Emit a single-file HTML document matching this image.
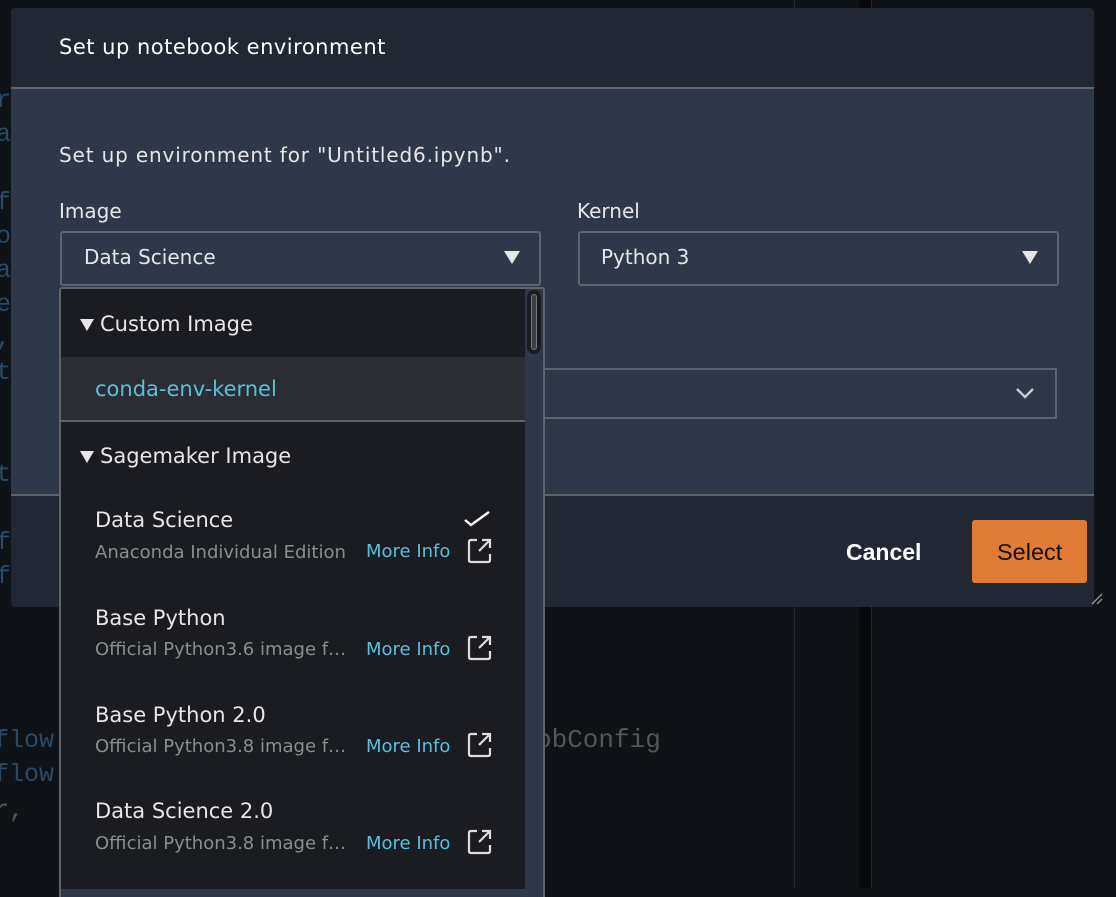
<!DOCTYPE html>
<html><head><meta charset="utf-8"><style>
*{margin:0;padding:0;box-sizing:border-box}
body{width:1116px;height:888px;overflow:hidden;background:#0f1217;font-family:"DejaVu Sans",sans-serif;position:relative}
.abs{position:absolute}
.code{font-family:"Liberation Mono",monospace;font-size:25px;white-space:pre}
.t{position:absolute;white-space:nowrap}
</style></head><body>
<!-- background -->
<div class="abs" style="left:794px;top:0;width:1px;height:888px;background:#23262b"></div>
<div class="abs" style="left:859px;top:0;width:12px;height:888px;background:#07080a"></div>
<div class="abs" style="left:871px;top:0;width:1px;height:888px;background:#23262b"></div>
<div class="code abs" style="left:-4px;top:84px;color:#2a4a66;line-height:34px">r
a

f
o
a
e
,
t


t

f
f</div>
<div class="code abs" style="left:-6px;top:724px;color:#2a4a66;line-height:34px">flow
flow</div>
<div class="code abs" style="left:-6px;top:796px;color:#555">r,</div>
<div class="code abs" style="left:536px;top:725px;font-size:26px;color:#555">obConfig</div>

<!-- dialog -->
<div class="abs" style="left:11px;top:8px;width:1083px;height:599px;background:#222833;border-radius:4px;overflow:hidden">
  <div class="abs" style="left:0;top:79px;width:1083px;height:2px;background:#5f6469"></div>
  <div class="abs" style="left:0;top:81px;width:1083px;height:405px;background:#2f3848"></div>
  <div class="abs" style="left:0;top:486px;width:1083px;height:2px;background:#5f6469"></div>
</div>
<div class="t" style="left:59px;top:35px;font-size:21px;letter-spacing:0.5px;color:#fff">Set up notebook environment</div>
<div class="t" style="left:59px;top:143px;font-size:20px;letter-spacing:0.85px;color:#e6e6e6">Set up environment for "Untitled6.ipynb".</div>
<div class="t" style="left:59px;top:199px;font-size:20px;color:#e6e6e6">Image</div>
<div class="t" style="left:577px;top:199px;font-size:20px;color:#e6e6e6">Kernel</div>
<div class="abs" style="left:60px;top:231px;width:481px;height:55px;border:2px solid #5f646b;border-radius:3px"></div>
<div class="t" style="left:84px;top:245px;font-size:20px;color:#e6e6e6">Data Science</div>
<svg class="abs" style="left:503px;top:250px" width="18" height="15"><path d="M1 1H17L9 14Z" fill="#e6e6e6"/></svg>
<div class="abs" style="left:578px;top:231px;width:481px;height:55px;border:2px solid #5f646b;border-radius:3px"></div>
<div class="t" style="left:601px;top:245px;font-size:20px;color:#e6e6e6">Python 3</div>
<svg class="abs" style="left:1021px;top:250px" width="18" height="15"><path d="M1 1H17L9 14Z" fill="#e6e6e6"/></svg>
<div class="abs" style="left:530px;top:368px;width:527px;height:51px;border:2px solid #5f646b"></div>
<svg class="abs" style="left:1015px;top:386px" width="20" height="14"><path d="M2 3L10 11L18 3" stroke="#ccc" stroke-width="2.4" fill="none"/></svg>

<!-- footer -->
<div class="t" style="left:846px;top:539px;font-size:23px;font-family:'Liberation Sans',sans-serif;font-weight:bold;color:#fff">Cancel</div>
<div class="abs" style="left:972px;top:520px;width:115px;height:63px;background:#e07b35;border-radius:3px"></div>
<div class="t" style="left:997px;top:539px;font-size:23.5px;font-family:'Liberation Sans',sans-serif;color:#111">Select</div>
<svg class="abs" style="left:1090px;top:592px" width="14" height="14"><path d="M2 12L12 2M7 12L12 7" stroke="#999" stroke-width="1.3"/></svg>

<!-- dropdown -->
<div class="abs" style="left:59px;top:287px;width:486px;height:610px;border:2px solid #5f646b;border-bottom:none;background:#2f3848;border-radius:3px 3px 0 0"></div>
<div class="abs" style="left:61px;top:289px;width:464px;height:600px;background:#1a1c21"></div>
<div class="abs" style="left:61px;top:357px;width:464px;height:63px;background:#2b2d32"></div>
<div class="abs" style="left:61px;top:420px;width:464px;height:2px;background:#5f646b"></div>
<div class="abs" style="left:527px;top:290px;width:14px;height:64px;background:#1a1c21;border-radius:7px"></div>
<div class="abs" style="left:531px;top:294px;width:6px;height:56px;background:#3a3e46;border:1px solid #777;border-radius:3px"></div>

<svg class="abs" style="left:79px;top:318px" width="16" height="14"><path d="M1 1H15L8 13Z" fill="#e6e6e6"/></svg>
<div class="t" style="left:100px;top:312px;font-size:21px;color:#e6e6e6">Custom Image</div>
<div class="t" style="left:95px;top:377px;font-size:21px;color:#5bc0d8">conda-env-kernel</div>
<svg class="abs" style="left:79px;top:450px" width="16" height="14"><path d="M1 1H15L8 13Z" fill="#e6e6e6"/></svg>
<div class="t" style="left:100px;top:444px;font-size:21px;color:#e6e6e6">Sagemaker Image</div>

<svg class="abs" style="left:463px;top:510px" width="28" height="18"><path d="M2 10L8 15L26 2" stroke="#fff" stroke-width="2.4" fill="none"/></svg>

<div class="t" style="left:95px;top:508px;font-size:21px;color:#e6e6e6">Data Science</div>
<div class="t" style="left:95px;top:542px;font-size:18px;color:#8a8c90">Anaconda Individual Edition</div>
<div class="t" style="left:95px;top:606px;font-size:21px;color:#e6e6e6">Base Python</div>
<div class="t" style="left:95px;top:639px;font-size:18px;color:#8a8c90">Official Python3.6 image f…</div>
<div class="t" style="left:95px;top:703px;font-size:21px;color:#e6e6e6">Base Python 2.0</div>
<div class="t" style="left:95px;top:736px;font-size:18px;color:#8a8c90">Official Python3.8 image f…</div>
<div class="t" style="left:95px;top:799px;font-size:21px;color:#e6e6e6">Data Science 2.0</div>
<div class="t" style="left:95px;top:833px;font-size:18px;color:#8a8c90">Official Python3.8 image f…</div>

<div class="abs" style="left:352px;top:530px;width:12px;height:340px;background:#1a1c21"></div>

<div class="t" style="left:366px;top:541px;font-size:18px;color:#5bc0d8">More Info</div>
<div class="t" style="left:366px;top:639px;font-size:18px;color:#5bc0d8">More Info</div>
<div class="t" style="left:366px;top:736px;font-size:18px;color:#5bc0d8">More Info</div>
<div class="t" style="left:366px;top:833px;font-size:18px;color:#5bc0d8">More Info</div>
<svg class="abs" style="left:467px;top:538px" width="26" height="26"><path d="M10 2H4Q2 2 2 4V22Q2 24 4 24H21Q23 24 23 22V16M12 13L22 3M15 2H23V10" stroke="#ddd" stroke-width="2.2" fill="none"/></svg>
<svg class="abs" style="left:467px;top:635px" width="26" height="26"><path d="M10 2H4Q2 2 2 4V22Q2 24 4 24H21Q23 24 23 22V16M12 13L22 3M15 2H23V10" stroke="#ddd" stroke-width="2.2" fill="none"/></svg>
<svg class="abs" style="left:467px;top:732px" width="26" height="26"><path d="M10 2H4Q2 2 2 4V22Q2 24 4 24H21Q23 24 23 22V16M12 13L22 3M15 2H23V10" stroke="#ddd" stroke-width="2.2" fill="none"/></svg>
<svg class="abs" style="left:467px;top:829px" width="26" height="26"><path d="M10 2H4Q2 2 2 4V22Q2 24 4 24H21Q23 24 23 22V16M12 13L22 3M15 2H23V10" stroke="#ddd" stroke-width="2.2" fill="none"/></svg>
</body></html>
